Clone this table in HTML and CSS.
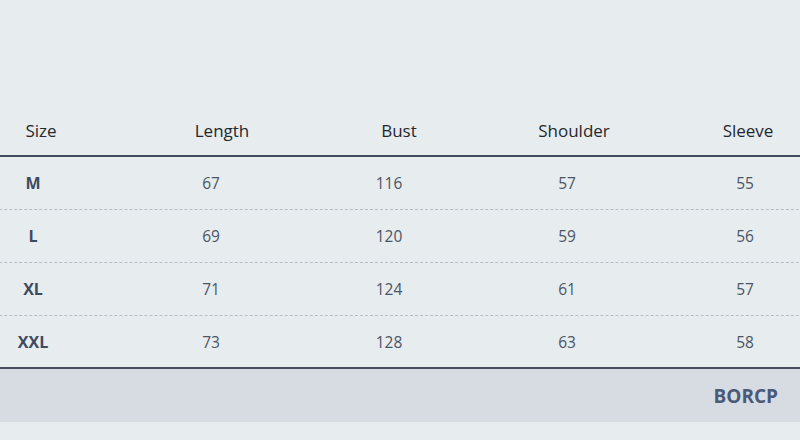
FILE: index.html
```html
<!DOCTYPE html>
<html>
<head>
<meta charset="utf-8">
<link rel="stylesheet" href="styles.css">
</head>
<body>
<div class="page">
  <div class="head">
    <div>Size</div><div>Length</div><div>Bust</div><div>Shoulder</div><div>Sleeve</div>
  </div>
  <div class="row"><div class="sz">M</div><div>67</div><div>116</div><div>57</div><div>55</div></div>
  <div class="row"><div class="sz">L</div><div>69</div><div>120</div><div>59</div><div>56</div></div>
  <div class="row"><div class="sz">XL</div><div>71</div><div>124</div><div>61</div><div>57</div></div>
  <div class="row last"><div class="sz">XXL</div><div>73</div><div>128</div><div>63</div><div>58</div></div>
  <div class="foot"><span class="brand">BORCP</span></div>
</div>
</body>
</html>
```
FILE: styles.css
```css
html, body {
  margin: 0;
  padding: 0;
  background: #e7ecef;
  overflow: hidden;
}
.page {
  width: 800px;
  height: 440px;
  padding-top: 106px;
  box-sizing: border-box;
  font-family: "Open Sans", "Noto Sans", sans-serif;
  overflow: hidden;
}
.head {
  display: grid;
  grid-template-columns: 82px 280px 74px 276px 72px;
  height: 49px;
  align-items: center;
  text-align: center;
  font-size: 17px;
  font-weight: 400;
  color: #24282c;
  border-bottom: 2px solid #3e4b5b;
  width: 800px;
  box-sizing: content-box;
}
.row {
  display: grid;
  grid-template-columns: repeat(5, 178px);
  margin-left: -56px;
  width: 890px;
  height: 52px;
  align-items: center;
  text-align: center;
  font-size: 15.5px;
  color: #4b5565;
  border-bottom: 1px dashed #b8bec5;
}
.row.last {
  border-bottom: 2px solid #454d5f;
  height: 51px;
}
.sz {
  font-weight: 700;
  font-size: 16px;
  color: #3e4a5f;
}
.foot {
  height: 53px;
  background: #d7dbe2;
  display: flex;
  align-items: center;
  justify-content: flex-end;
  padding-right: 22px;
}
.brand {
  font-weight: 700;
  font-size: 19px;
  color: #4a5a78;
}
```
